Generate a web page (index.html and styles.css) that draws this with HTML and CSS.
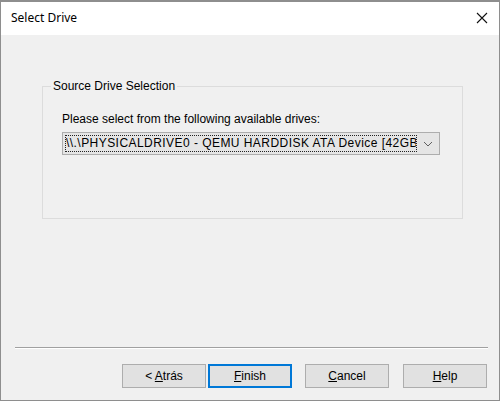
FILE: index.html
```html
<!DOCTYPE html>
<html>
<head>
<meta charset="utf-8">
<link rel="stylesheet" href="styles.css">
</head>
<body>
<div class="window">
  <div class="titlebar">
    <span class="title">Select Drive</span>
    <svg class="close" width="12" height="12" viewBox="0 0 12 12"><path d="M1 1 L11 11 M11 1 L1 11" stroke="#111" stroke-width="1.1" fill="none"/></svg>
  </div>
  <div class="content">
    <fieldset class="group">
      <legend class="legend">Source Drive Selection</legend>
      <div class="prompt">Please select from the following available drives:</div>
      <div class="combo">
        <span class="combo-text">\\.\PHYSICALDRIVE0 - QEMU HARDDISK ATA Device [42GB]</span>
        <svg class="chev" width="10" height="6" viewBox="0 0 10 6"><path d="M1 1 L5 5 L9 1" stroke="#606060" stroke-width="1" fill="none"/></svg>
      </div>
    </fieldset>
    <div class="spacer"></div>
    <div class="separator"></div>
    <div class="buttons">
      <button class="btn">&lt; <u>A</u>trás</button>
      <button class="btn btn-default gap-s"><u>F</u>inish</button>
      <button class="btn gap-m"><u>C</u>ancel</button>
      <button class="btn gap-l"><u>H</u>elp</button>
    </div>
  </div>
</div>
</body>
</html>
```

FILE: styles.css
```css
html, body {
  margin: 0;
  padding: 0;
  background: #ffffff;
}
.window {
  box-sizing: border-box;
  width: 500px;
  height: 401px;
  border: 1px solid #8e8e8e;
  border-top-width: 2px;
  display: flex;
  flex-direction: column;
  font-family: "Liberation Sans", Arial, sans-serif;
  font-size: 12px;
  color: #000;
}
.titlebar {
  height: 33px;
  background: #fff;
  display: flex;
  align-items: center;
  justify-content: space-between;
  padding: 0 11px 0 10px;
  flex: none;
}
.title {
  font-family: "Noto Sans", "Open Sans", sans-serif;
  font-size: 12px;
  color: #000;
  margin-top: -2px;
}
.close {
  margin-top: -2px;
}
.content {
  flex: 1;
  background: #f0f0f0;
  display: flex;
  flex-direction: column;
  padding: 45px 0 12px 0;
}
.group {
  box-sizing: border-box;
  margin: 0 0 0 41px;
  width: 421px;
  height: 139px;
  border: 1px solid #dcdcdc;
  padding: 19px 0 0 19px;
}
.legend {
  padding: 0 2px;
  margin-left: -11px;
  line-height: 13px;
  color: #000;
}
.prompt {
  line-height: 14px;
}
.combo {
  box-sizing: border-box;
  margin-top: 6px;
  width: 378px;
  height: 23px;
  background: #e5e5e5;
  border: 1px solid #adadad;
  display: flex;
  align-items: center;
  padding: 0 6px 0 2px;
}
.combo-text {
  box-sizing: border-box;
  width: 352px;
  height: 17px;
  line-height: 15px;
  border: 1px dotted #222;
  white-space: nowrap;
  overflow: hidden;
  letter-spacing: 0.45px;
  color: #000;
}
.chev {
  margin-left: auto;
}
.spacer {
  flex: 1;
}
.separator {
  margin: 0 11px 0 14px;
  border-top: 1px solid #a0a0a0;
  border-bottom: 1px solid #ffffff;
}
.buttons {
  display: flex;
  justify-content: flex-end;
  margin: 15px 12px 0 0;
}
.btn {
  box-sizing: border-box;
  width: 84px;
  height: 24px;
  background: #e1e1e1;
  border: 1px solid #adadad;
  font-family: "Liberation Sans", Arial, sans-serif;
  font-size: 12px;
  color: #000;
  padding: 0;
  margin: 0;
}
.btn-default {
  border: 2px solid #0078d7;
}
.gap-s { margin-left: 2px; }
.gap-m { margin-left: 13px; }
.gap-l { margin-left: 14px; }
```
